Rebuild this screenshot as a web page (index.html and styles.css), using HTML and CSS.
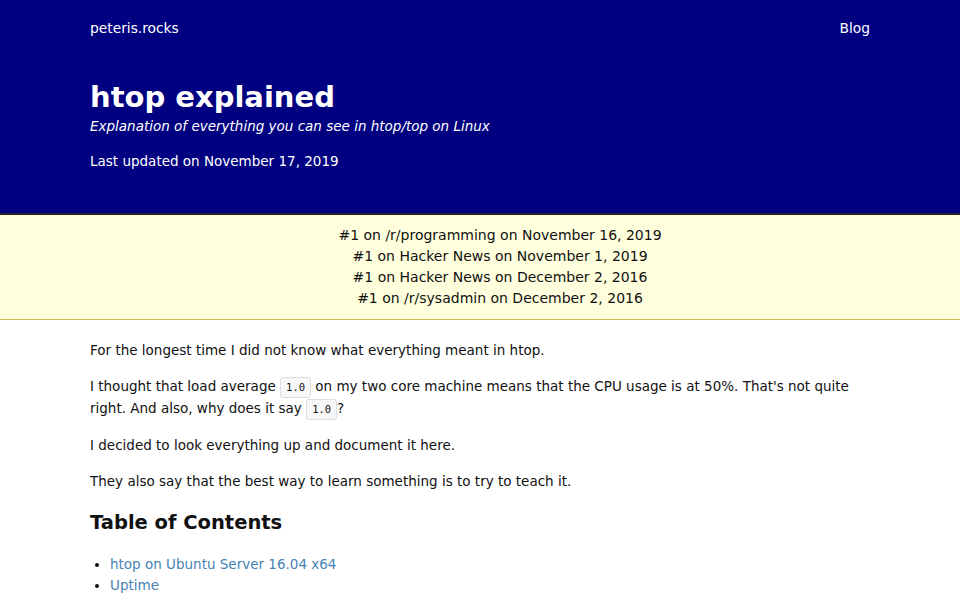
FILE: index.html
```html
<!DOCTYPE html>
<html lang="en">
<head>
    <meta charset="UTF-8">
    <title>htop explained</title>
    <meta name="viewport" content="width=device-width, initial-scale=1.0">
    <link rel="stylesheet" href="styles.css">
</head>
<body>

<header class="site-header">
    <div class="wrap">
        <nav class="top-nav">
            <a href="/">peteris.rocks</a>
            <a href="/blog">Blog</a>
        </nav>
        <h1>htop explained</h1>
        <p class="subtitle">Explanation of everything you can see in htop/top on Linux</p>
        <p class="updated">Last updated on November 17, 2019</p>
    </div>
</header>

<div class="notice">
    <div>#1 on /r/programming on November 16, 2019</div>
    <div>#1 on Hacker News on November 1, 2019</div>
    <div>#1 on Hacker News on December 2, 2016</div>
    <div>#1 on /r/sysadmin on December 2, 2016</div>
</div>

<main class="wrap content">
    <p>For the longest time I did not know what everything meant in htop.</p>
    <p>I thought that load average <code>1.0</code> on my two core machine means that the CPU usage is at 50%. That's not quite right. And also, why does it say <code>1.0</code>?</p>
    <p>I decided to look everything up and document it here.</p>
    <p>They also say that the best way to learn something is to try to teach it.</p>

    <h2>Table of Contents</h2>
    <ul class="toc">
        <li><a href="#htop-on-ubuntu-server-16-04-x64">htop on Ubuntu Server 16.04 x64</a></li>
        <li><a href="#uptime">Uptime</a></li>
    </ul>
</main>

</body>
</html>
```

FILE: styles.css
```css
* {
    margin: 0;
    padding: 0;
    box-sizing: border-box;
}

body {
    font-family: 'DejaVu Sans', Verdana, sans-serif;
    font-size: 13.5px;
    line-height: 21px;
    color: #111;
    background: #fff;
}

a {
    color: #4682b4;
    text-decoration: none;
}

.wrap {
    width: 780px;
    margin: 0 auto;
}

/* header */

.site-header {
    background: #000080;
    color: #fff;
    border-bottom: 2px solid #222;
    padding: 18px 0 41px;
}

.top-nav {
    display: flex;
    justify-content: space-between;
    font-size: 13.8px;
}

.top-nav a {
    color: #fff;
}

.site-header h1 {
    font-size: 29px;
    line-height: 38px;
    margin-top: 39px;
}

.subtitle {
    font-style: italic;
}

.updated {
    margin-top: 14px;
}

/* press mentions */

.notice {
    background: #ffffdd;
    border-bottom: 1px solid #d8b45a;
    text-align: center;
    font-size: 14px;
    padding: 10px 0 10px 40px;
}

/* article */

.content {
    padding-top: 20px;
}

.content p {
    margin-bottom: 15px;
}

code {
    display: inline-block;
    font-family: 'DejaVu Sans Mono', monospace;
    font-size: 10.5px;
    line-height: 15px;
    padding: 2px 5px;
    background: #f7f7f7;
    border: 1px solid #ddd;
    border-radius: 3px;
}

.content h2 {
    font-size: 19.5px;
    line-height: 28px;
    margin: 17px 0 17px;
}

.toc {
    padding-left: 20px;
}
```
